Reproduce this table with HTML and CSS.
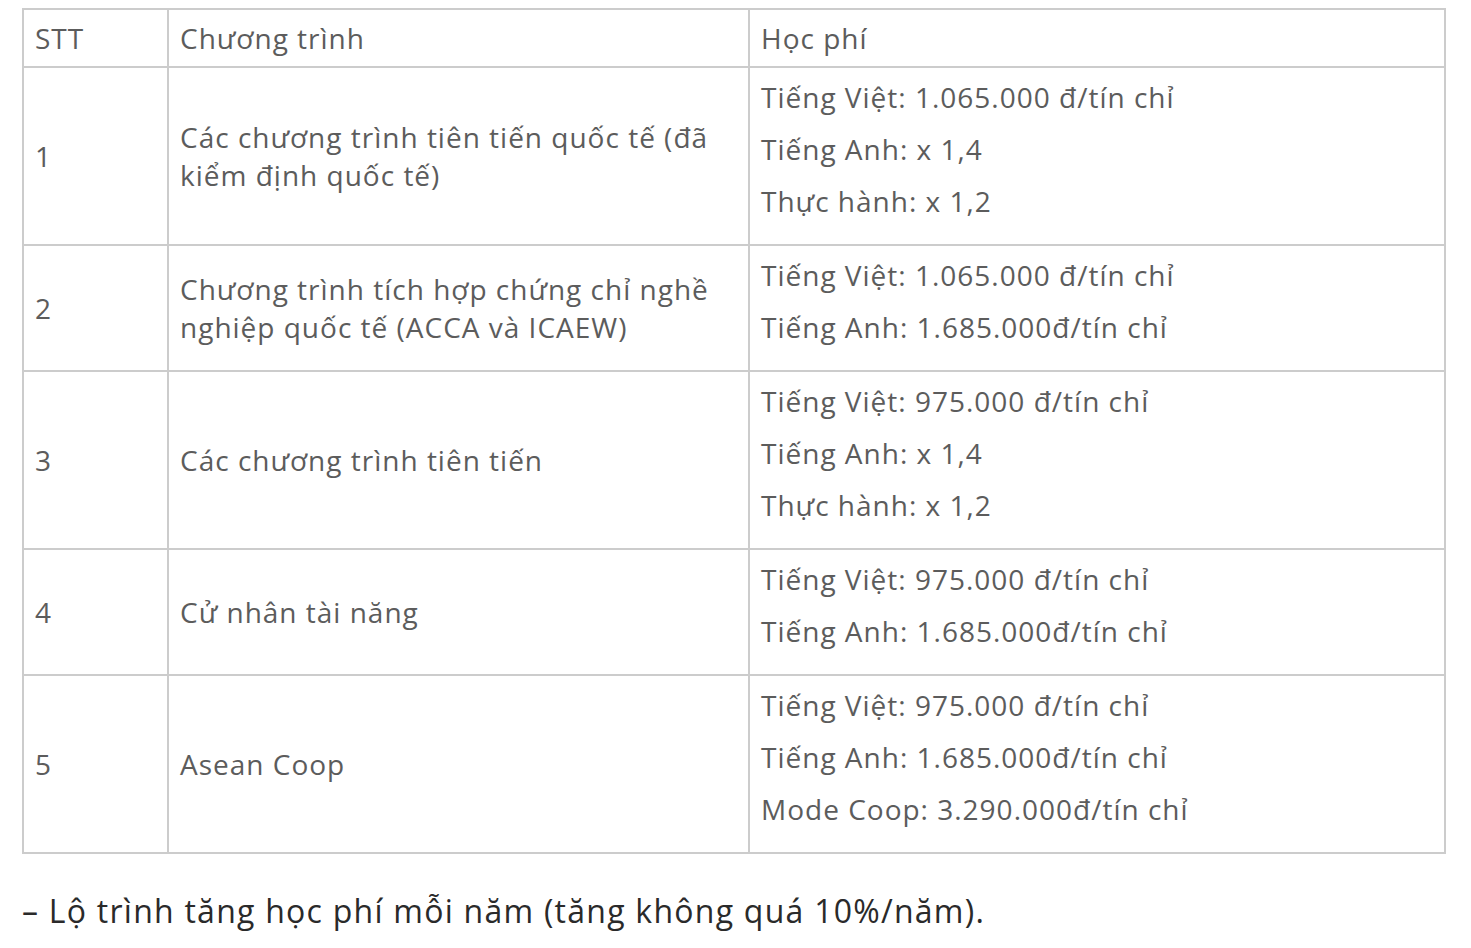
FILE: index.html
```html
<!DOCTYPE html>
<html lang="vi">
<head>
<meta charset="utf-8">
<title>Học phí</title>
<link rel="stylesheet" href="styles.css">
</head>
<body>
<div class="page">
  <table class="fees">
    <colgroup>
      <col class="c-stt">
      <col class="c-prog">
      <col class="c-fee">
    </colgroup>
    <thead>
      <tr>
        <th class="cell head">STT</th>
        <th class="cell head">Chương trình</th>
        <th class="cell head">Học phí</th>
      </tr>
    </thead>
    <tbody>
      <tr>
        <td class="cell mid">1</td>
        <td class="cell mid">Các chương trình tiên tiến quốc tế (đã kiểm định quốc tế)</td>
        <td class="cell fee"><p>Tiếng Việt: 1.065.000 đ/tín chỉ</p><p>Tiếng Anh: x 1,4</p><p>Thực hành: x 1,2</p></td>
      </tr>
      <tr>
        <td class="cell mid">2</td>
        <td class="cell mid">Chương trình tích hợp chứng chỉ nghề nghiệp quốc tế (ACCA và ICAEW)</td>
        <td class="cell fee"><p>Tiếng Việt: 1.065.000 đ/tín chỉ</p><p>Tiếng Anh: 1.685.000đ/tín chỉ</p></td>
      </tr>
      <tr>
        <td class="cell mid">3</td>
        <td class="cell mid">Các chương trình tiên tiến</td>
        <td class="cell fee"><p>Tiếng Việt: 975.000 đ/tín chỉ</p><p>Tiếng Anh: x 1,4</p><p>Thực hành: x 1,2</p></td>
      </tr>
      <tr>
        <td class="cell mid">4</td>
        <td class="cell mid">Cử nhân tài năng</td>
        <td class="cell fee"><p>Tiếng Việt: 975.000 đ/tín chỉ</p><p>Tiếng Anh: 1.685.000đ/tín chỉ</p></td>
      </tr>
      <tr>
        <td class="cell mid">5</td>
        <td class="cell mid">Asean Coop</td>
        <td class="cell fee"><p>Tiếng Việt: 975.000 đ/tín chỉ</p><p>Tiếng Anh: 1.685.000đ/tín chỉ</p><p>Mode Coop: 3.290.000đ/tín chỉ</p></td>
      </tr>
    </tbody>
  </table>
  <p class="note">– Lộ trình tăng học phí mỗi năm (tăng không quá 10%/năm).</p>
</div>
</body>
</html>
```
FILE: styles.css
```css
html, body {
  margin: 0;
  padding: 0;
  background: #ffffff;
}
.page {
  padding: 8px 25px 0 22px;
  font-family: "Open Sans", "Noto Sans", sans-serif;
  color: #5c5c5c;
}
.fees {
  width: 100%;
  border-collapse: collapse;
  border: 2px solid #cccccc;
  table-layout: fixed;
  font-size: 28px;
  letter-spacing: 1px;
}
.c-stt { width: 145px; }
.c-prog { width: 581px; }
.cell {
  border: 2px solid #cccccc;
  text-align: left;
  font-weight: 400;
  padding: 10px 10px 10px 11px;
  line-height: 38px;
  vertical-align: middle;
}
.head {
  padding-top: 9px;
  padding-bottom: 9px;
}
.fee {
  padding: 3px 10px 17px 11px;
  line-height: 52px;
  vertical-align: top;
}
.fee p {
  margin: 0;
}
.note {
  margin: 37px 0 0;
  font-size: 32px;
  line-height: 40px;
  letter-spacing: 1.25px;
  color: #2a2a2a;
}
```
